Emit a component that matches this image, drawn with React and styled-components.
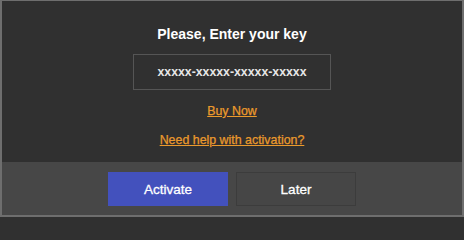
import React from "react";
import styled, { createGlobalStyle } from "styled-components";

const Global = createGlobalStyle`
  html, body { margin: 0; padding: 0; background: #303030; }
  body { font-family: "Liberation Sans", Arial, sans-serif; }
`;

const Dialog = styled.div`
  box-sizing: border-box;
  width: 464px;
  height: 217px;
  border: 2px solid #6e6e6e;
  border-top-width: 1px;
  display: flex;
  flex-direction: column;
  background: #303030;
`;

const Body = styled.div`
  height: 161px;
  display: flex;
  flex-direction: column;
  align-items: center;
  padding-top: 25px;
  box-sizing: border-box;
`;

const Title = styled.div`
  color: #ffffff;
  font-weight: bold;
  font-size: 14px;
  line-height: 16px;
`;

const KeyBox = styled.div`
  box-sizing: border-box;
  margin-top: 12px;
  width: 198px;
  height: 36px;
  border: 1px solid #555555;
  display: flex;
  align-items: center;
  justify-content: center;
  color: #e6e6e6;
  font-weight: bold;
  font-size: 12.3px;
`;

const Link = styled.a`
  color: #eb9a2c;
  font-size: 12.4px;
  line-height: 14px;
  text-decoration: underline;
  -webkit-text-stroke: 0.25px #eb9a2c;
  margin-top: ${(p) => p.$gap}px;
  cursor: pointer;
`;

const Footer = styled.div`
  flex: 1;
  background: #474747;
  display: flex;
  justify-content: center;
  align-items: flex-start;
  gap: 8px;
  padding-top: 10px;
  box-sizing: border-box;
`;

const Button = styled.button`
  box-sizing: border-box;
  width: 120px;
  height: 34px;
  font-family: "Liberation Sans", Arial, sans-serif;
  font-size: 13.5px;
  color: #ffffff;
  -webkit-text-stroke: 0.3px #ffffff;
  background: ${(p) => (p.$primary ? "#4351bd" : "#464646")};
  border: 1px solid ${(p) => (p.$primary ? "#4351bd" : "#3c3c3c")};
  padding: 0;
  cursor: pointer;
`;

export default function App() {
  return (
    <>
      <Global />
      <Dialog>
        <Body>
          <Title>Please, Enter your key</Title>
          <KeyBox>xxxxx-xxxxx-xxxxx-xxxxx</KeyBox>
          <Link $gap={14}>Buy Now</Link>
          <Link $gap={15}>Need help with activation?</Link>
        </Body>
        <Footer>
          <Button $primary>Activate</Button>
          <Button>Later</Button>
        </Footer>
      </Dialog>
    </>
  );
}
